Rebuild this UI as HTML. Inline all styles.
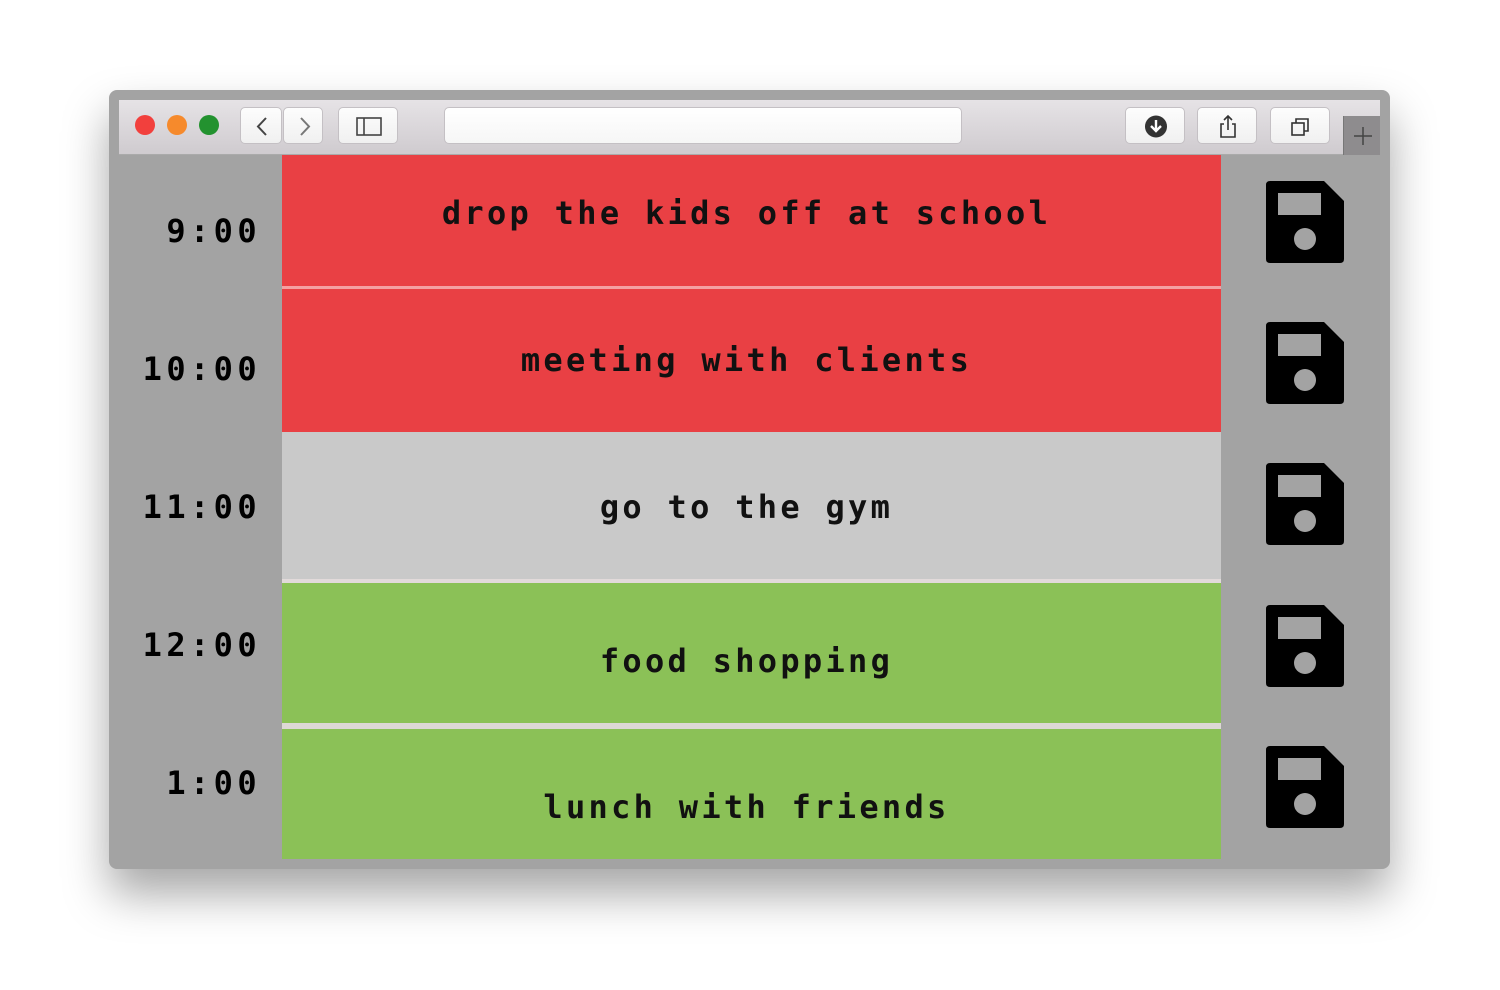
<!DOCTYPE html>
<html><head><meta charset="utf-8"><style>
*{margin:0;padding:0;box-sizing:border-box}
body{width:1500px;height:990px;background:#fff;position:relative;overflow:hidden;font-family:"DejaVu Sans Mono","Liberation Mono",monospace}
.win{position:absolute;left:109px;top:90px;width:1281px;height:779px;background:#a3a3a3;border-radius:8px;box-shadow:0 25px 45px rgba(0,0,0,.35)}
.bar{position:absolute;left:119px;top:100px;width:1261px;height:55px;background:linear-gradient(#e6e3e6,#cfcbcf);border-bottom:1px solid #aaa}
.dot{position:absolute;top:115px;width:20px;height:20px;border-radius:50%}
.btn{position:absolute;top:107px;height:37px;background:linear-gradient(#fdfdfd,#f0f0f0);border:1px solid #c4c0c4;border-radius:5px}
.row{position:absolute;left:282px;width:939px}
.ev{position:absolute;left:282px;width:939px;padding-right:10px;text-align:center;font-weight:bold;font-size:32px;letter-spacing:3.3px;color:#111;line-height:40px}
.tm{position:absolute;right:1239px;font-weight:bold;font-size:32px;letter-spacing:4.4px;color:#000;line-height:40px;text-align:right}
.ic{position:absolute;left:1266px;width:78px;height:82px}
</style></head><body>
<div class="win"></div>
<div class="bar"></div>
<div class="dot" style="left:135px;background:#f2403d"></div>
<div class="dot" style="left:167px;background:#f68a2c"></div>
<div class="dot" style="left:199px;background:#23922f"></div>
<div class="btn" style="left:240px;width:42px"><svg width="42" height="37"><path d="M25 10 L17 18.5 L25 27" stroke="#444" stroke-width="2" fill="none"/></svg></div>
<div class="btn" style="left:283px;width:40px"><svg width="40" height="37"><path d="M17 10 L25 18.5 L17 27" stroke="#777" stroke-width="2" fill="none"/></svg></div>
<div class="btn" style="left:338px;width:60px"><svg width="60" height="37"><rect x="18" y="10" width="24" height="17" stroke="#444" stroke-width="1.6" fill="none"/><line x1="25" y1="10" x2="25" y2="27" stroke="#444" stroke-width="1.6"/></svg></div>
<div class="btn" style="left:444px;width:518px;background:linear-gradient(#fff,#f6f6f6)"></div>
<div class="btn" style="left:1125px;width:60px"><svg width="60" height="37"><circle cx="30" cy="18.5" r="11" fill="#333"/><path d="M30 12v11M25 18l5 5 5-5" stroke="#fff" stroke-width="2.4" fill="none"/></svg></div>
<div class="btn" style="left:1197px;width:60px"><svg width="60" height="37"><path d="M26 16h-3v13h14v-13h-3M30 8v14M26 12l4-4 4 4" stroke="#333" stroke-width="1.6" fill="none"/></svg></div>
<div class="btn" style="left:1270px;width:60px"><svg width="60" height="37"><rect x="21" y="15" width="12" height="12" stroke="#333" stroke-width="1.6" fill="none"/><path d="M25 15v-4h12v12h-4" stroke="#333" stroke-width="1.6" fill="none"/></svg></div>
<div style="position:absolute;left:1343px;top:116px;width:37px;height:39px;background:#8e8c8e;border-left:1px solid #777"><svg width="37" height="39"><path d="M19 11v18M10 20h18" stroke="#444" stroke-width="1.5"/></svg></div>

<div class="row" style="top:155px;height:131px;background:#e94044"></div>
<div class="row" style="top:286px;height:3px;background:#f4a0a2"></div>
<div class="row" style="top:289px;height:143px;background:#e94044"></div>
<div class="row" style="top:432px;height:147px;background:#c9c9c9"></div>
<div class="row" style="top:579px;height:4px;background:#e2dada"></div>
<div class="row" style="top:583px;height:140px;background:#8bc157"></div>
<div class="row" style="top:723px;height:6px;background:#ddd8d6"></div>
<div class="row" style="top:729px;height:130px;background:#8bc157"></div>

<div class="ev" style="top:193px">drop the kids off at school</div>
<div class="ev" style="top:340px">meeting with clients</div>
<div class="ev" style="top:487px">go to the gym</div>
<div class="ev" style="top:641px">food shopping</div>
<div class="ev" style="top:787px">lunch with friends</div>

<div class="tm" style="top:211px">9:00</div>
<div class="tm" style="top:349px">10:00</div>
<div class="tm" style="top:487px">11:00</div>
<div class="tm" style="top:625px">12:00</div>
<div class="tm" style="top:763px">1:00</div>

<svg class="ic" style="top:181px" viewBox="0 0 78 82"><path d="M4 0H58L78 20V78Q78 82 74 82H4Q0 82 0 78V4Q0 0 4 0Z" fill="#000"/><rect x="12" y="12" width="43" height="22" fill="#a3a3a3"/><circle cx="39" cy="58" r="11" fill="#a3a3a3"/></svg>
<svg class="ic" style="top:322px" viewBox="0 0 78 82"><path d="M4 0H58L78 20V78Q78 82 74 82H4Q0 82 0 78V4Q0 0 4 0Z" fill="#000"/><rect x="12" y="12" width="43" height="22" fill="#a3a3a3"/><circle cx="39" cy="58" r="11" fill="#a3a3a3"/></svg>
<svg class="ic" style="top:463px" viewBox="0 0 78 82"><path d="M4 0H58L78 20V78Q78 82 74 82H4Q0 82 0 78V4Q0 0 4 0Z" fill="#000"/><rect x="12" y="12" width="43" height="22" fill="#a3a3a3"/><circle cx="39" cy="58" r="11" fill="#a3a3a3"/></svg>
<svg class="ic" style="top:605px" viewBox="0 0 78 82"><path d="M4 0H58L78 20V78Q78 82 74 82H4Q0 82 0 78V4Q0 0 4 0Z" fill="#000"/><rect x="12" y="12" width="43" height="22" fill="#a3a3a3"/><circle cx="39" cy="58" r="11" fill="#a3a3a3"/></svg>
<svg class="ic" style="top:746px" viewBox="0 0 78 82"><path d="M4 0H58L78 20V78Q78 82 74 82H4Q0 82 0 78V4Q0 0 4 0Z" fill="#000"/><rect x="12" y="12" width="43" height="22" fill="#a3a3a3"/><circle cx="39" cy="58" r="11" fill="#a3a3a3"/></svg>
</body></html>
